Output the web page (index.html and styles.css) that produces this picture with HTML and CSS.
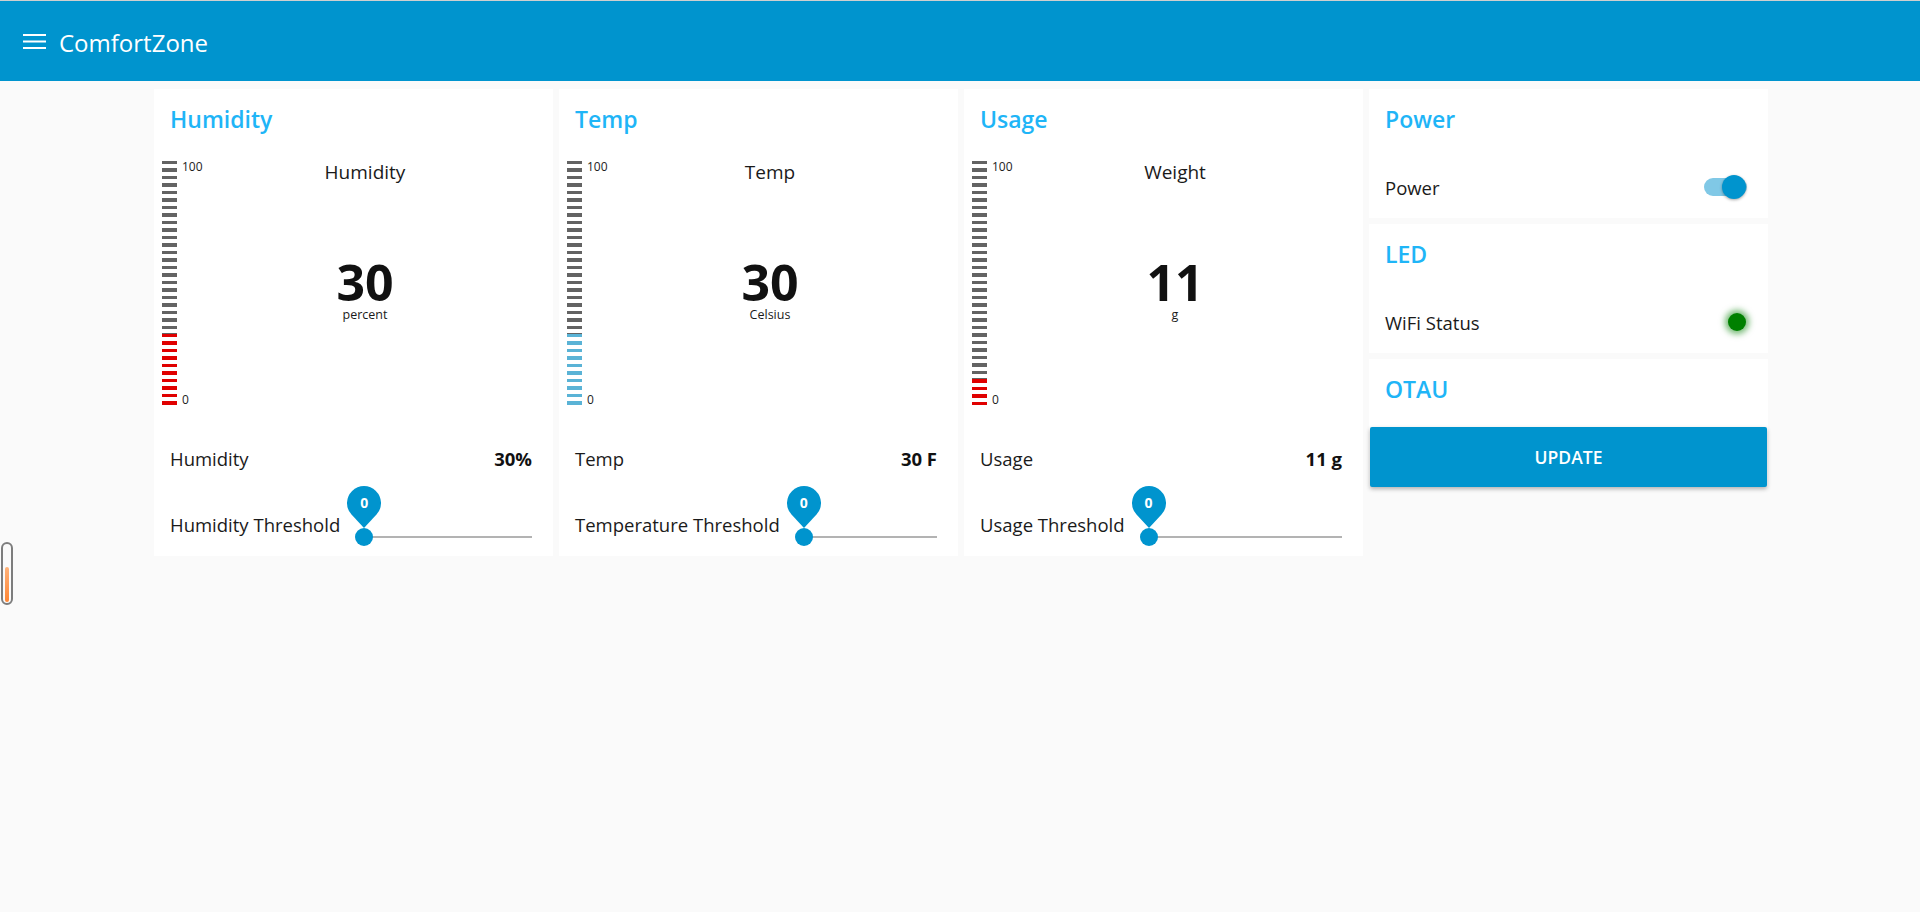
FILE: index.html
```html
<!DOCTYPE html>
<html lang="en">
<head>
<meta charset="utf-8">
<title>ComfortZone</title>
<link rel="stylesheet" href="styles.css">
</head>
<body>
<header class="topbar">
  <svg class="menu" viewBox="0 0 24 24" aria-hidden="true"><rect x="0" y="4" width="23" height="2" fill="#fff"/><rect x="0" y="10.5" width="23" height="2" fill="#fff"/><rect x="0" y="17" width="23" height="2" fill="#fff"/></svg>
  <span class="app-title">ComfortZone</span>
</header>

<main class="board">
  <section class="card card-gauge">
    <div class="card-title">Humidity</div>
    <div class="gauge">
      <div class="scale">
        <div class="ticks" style="height:172.5px"></div>
        <div class="ticks ticks-red" style="height:71px"></div>
        <span class="scale-max">100</span>
        <span class="scale-min">0</span>
      </div>
      <div class="readout">
        <div class="readout-label">Humidity</div>
        <div class="readout-value">30</div>
        <div class="readout-unit">percent</div>
      </div>
    </div>
    <div class="row row-reading"><span>Humidity</span><span class="row-value">30%</span></div>
    <div class="row row-slider">
      <span>Humidity Threshold</span>
      <div class="slider">
        <div class="slider-track"></div>
        <div class="slider-thumb"></div>
        <div class="slider-pin"><svg viewBox="0 0 34 44"><path d="M17 42 L4.5 28.6 A17 17 0 1 1 29.5 28.6 Z" fill="#0094ce"/></svg><span>0</span></div>
      </div>
    </div>
  </section>

  <section class="card card-gauge">
    <div class="card-title">Temp</div>
    <div class="gauge">
      <div class="scale">
        <div class="ticks" style="height:172.5px"></div>
        <div class="ticks ticks-blue" style="height:71px"></div>
        <span class="scale-max">100</span>
        <span class="scale-min">0</span>
      </div>
      <div class="readout">
        <div class="readout-label">Temp</div>
        <div class="readout-value">30</div>
        <div class="readout-unit">Celsius</div>
      </div>
    </div>
    <div class="row row-reading"><span>Temp</span><span class="row-value">30 F</span></div>
    <div class="row row-slider">
      <span>Temperature Threshold</span>
      <div class="slider">
        <div class="slider-track"></div>
        <div class="slider-thumb"></div>
        <div class="slider-pin"><svg viewBox="0 0 34 44"><path d="M17 42 L4.5 28.6 A17 17 0 1 1 29.5 28.6 Z" fill="#0094ce"/></svg><span>0</span></div>
      </div>
    </div>
  </section>

  <section class="card card-gauge">
    <div class="card-title">Usage</div>
    <div class="gauge">
      <div class="scale">
        <div class="ticks" style="height:217.5px"></div>
        <div class="ticks ticks-red" style="height:26px"></div>
        <span class="scale-max">100</span>
        <span class="scale-min">0</span>
      </div>
      <div class="readout">
        <div class="readout-label">Weight</div>
        <div class="readout-value">11</div>
        <div class="readout-unit">g</div>
      </div>
    </div>
    <div class="row row-reading"><span>Usage</span><span class="row-value">11 g</span></div>
    <div class="row row-slider">
      <span>Usage Threshold</span>
      <div class="slider">
        <div class="slider-track"></div>
        <div class="slider-thumb"></div>
        <div class="slider-pin"><svg viewBox="0 0 34 44"><path d="M17 42 L4.5 28.6 A17 17 0 1 1 29.5 28.6 Z" fill="#0094ce"/></svg><span>0</span></div>
      </div>
    </div>
  </section>

  <div class="side">
    <section class="card card-control">
      <div class="card-title">Power</div>
      <div class="row row-control">
        <span>Power</span>
        <div class="toggle"><div class="toggle-track"></div><div class="toggle-thumb"></div></div>
      </div>
    </section>
    <section class="card card-control">
      <div class="card-title">LED</div>
      <div class="row row-control">
        <span>WiFi Status</span>
        <div class="led"></div>
      </div>
    </section>
    <section class="card card-otau">
      <div class="card-title">OTAU</div>
      <button class="update-btn" type="button">UPDATE</button>
    </section>
  </div>
</main>

<div class="thermo"><div class="thermo-fill"></div></div>
</body>
</html>
```

FILE: styles.css
```css
* { box-sizing: border-box; }

html, body {
  margin: 0;
  background: #fafafa;
}

body {
  font-family: "Open Sans", "Noto Sans", sans-serif;
  color: #1a1a1a;
  min-height: 912px;
}

.topbar {
  height: 81px;
  border-top: 1px solid #cfcfcf;
  background: #0094ce;
  display: flex;
  align-items: center;
  padding-left: 23px;
  color: #fff;
}

.menu {
  display: block;
  width: 24px;
  height: 24px;
  margin-top: 2px;
}

.app-title {
  margin-left: 12px;
  margin-top: 3px;
  font-size: 24px;
  line-height: 32px;
}

.board {
  display: flex;
  align-items: flex-start;
  gap: 6px;
  padding: 8px 0 0 154px;
}

.card {
  width: 399px;
  background: #fff;
}

.card-title {
  padding: 14px 17px 0 16px;
  line-height: 32px;
  font-size: 23px;
  font-weight: 600;
  color: #1fb5f7;
}

.card-gauge { padding-bottom: 6px; }

.gauge {
  display: flex;
  height: 244px;
  margin-top: 26px;
  padding-left: 8px;
}

.scale {
  position: relative;
  flex: none;
  width: 15px;
  display: flex;
  flex-direction: column;
}

.ticks {
  flex: none;
  background: repeating-linear-gradient(to bottom, #636363 0 3.5px, transparent 3.5px 7.5px);
}

.ticks-red {
  background: repeating-linear-gradient(to bottom, #e00000 0 3.5px, transparent 3.5px 7.5px);
}

.ticks-blue {
  background: repeating-linear-gradient(to bottom, #5ab3d6 0 3.5px, transparent 3.5px 7.5px);
}

.scale-max,
.scale-min {
  position: absolute;
  left: 20px;
  font-size: 12px;
  line-height: 14px;
  color: #222;
}

.scale-max { top: -1px; }
.scale-min { bottom: -2px; }

.readout {
  flex: 1;
  display: flex;
  flex-direction: column;
  align-items: center;
}

.readout-label {
  margin-top: 1px;
  font-size: 19px;
  line-height: 20px;
}

.readout-value {
  margin-top: 75px;
  font-size: 50px;
  font-weight: 700;
  line-height: 50px;
  color: #111;
}

.readout-unit {
  margin-top: 1px;
  font-size: 12.5px;
  line-height: 14px;
}

.row {
  display: flex;
  align-items: center;
  justify-content: space-between;
  height: 48px;
  padding: 0 21px 0 16px;
  font-size: 18.5px;
}

.row > span { margin-bottom: 3px; }

.row-reading { margin-top: 31px; }

.row-value {
  font-weight: 700;
  color: #111;
}

.row-slider {
  margin-top: 18px;
  justify-content: flex-start;
}

.slider {
  position: relative;
  flex: 1;
  height: 48px;
  margin-left: 15px;
}

.slider-track {
  position: absolute;
  left: 9px;
  right: 0;
  top: 34px;
  height: 2px;
  background: #b3b3b3;
}

.slider-thumb {
  position: absolute;
  left: 0;
  top: 26px;
  width: 18px;
  height: 18px;
  border-radius: 50%;
  background: #0094ce;
}

.slider-pin {
  position: absolute;
  left: -8px;
  top: -16px;
  width: 34px;
  height: 44px;
}

.slider-pin svg {
  display: block;
  width: 34px;
  height: 44px;
}

.slider-pin span {
  position: absolute;
  left: 0;
  right: 0;
  top: 7px;
  text-align: center;
  font-size: 14px;
  line-height: 20px;
  font-weight: 700;
  color: #fff;
}

.side {
  display: flex;
  flex-direction: column;
  gap: 6px;
  width: 399px;
}

.card-control { padding-bottom: 5px; }

.row-control { margin-top: 30px; }

.toggle {
  position: relative;
  width: 43px;
  height: 24px;
  margin-bottom: 4px;
}

.toggle-track {
  position: absolute;
  left: 0;
  right: 0;
  top: 3px;
  height: 18px;
  border-radius: 9px;
  background: #80c8e6;
}

.toggle-thumb {
  position: absolute;
  right: 1px;
  top: 0;
  width: 24px;
  height: 24px;
  border-radius: 50%;
  background: #0094ce;
  box-shadow: 0 1px 3px rgba(0, 0, 0, 0.35);
}

.led {
  width: 18px;
  height: 18px;
  margin: 0 1px 4px 0;
  border-radius: 50%;
  background: #008000;
  box-shadow: 0 0 6px 3px rgba(0, 128, 0, 0.55);
}

.card-otau {
  display: flex;
  flex-direction: column;
}

.update-btn {
  height: 60px;
  margin: 22px 1px 0;
  border: 0;
  border-radius: 2px;
  background: #0094ce;
  color: #fff;
  font-family: "Open Sans", "Noto Sans", sans-serif;
  font-size: 17.5px;
  font-weight: 600;
  box-shadow: 0 2px 4px rgba(0, 0, 0, 0.3);
}

.thermo {
  position: fixed;
  left: 1px;
  top: 542px;
  width: 12px;
  height: 63px;
  border: 2px solid #7d7d7d;
  border-radius: 6px;
}

.thermo-fill {
  position: absolute;
  left: 1.5px;
  bottom: 1px;
  width: 4px;
  height: 35px;
  border-radius: 2px;
  background: linear-gradient(to bottom, #ffb27a, #ff8533);
}
```
